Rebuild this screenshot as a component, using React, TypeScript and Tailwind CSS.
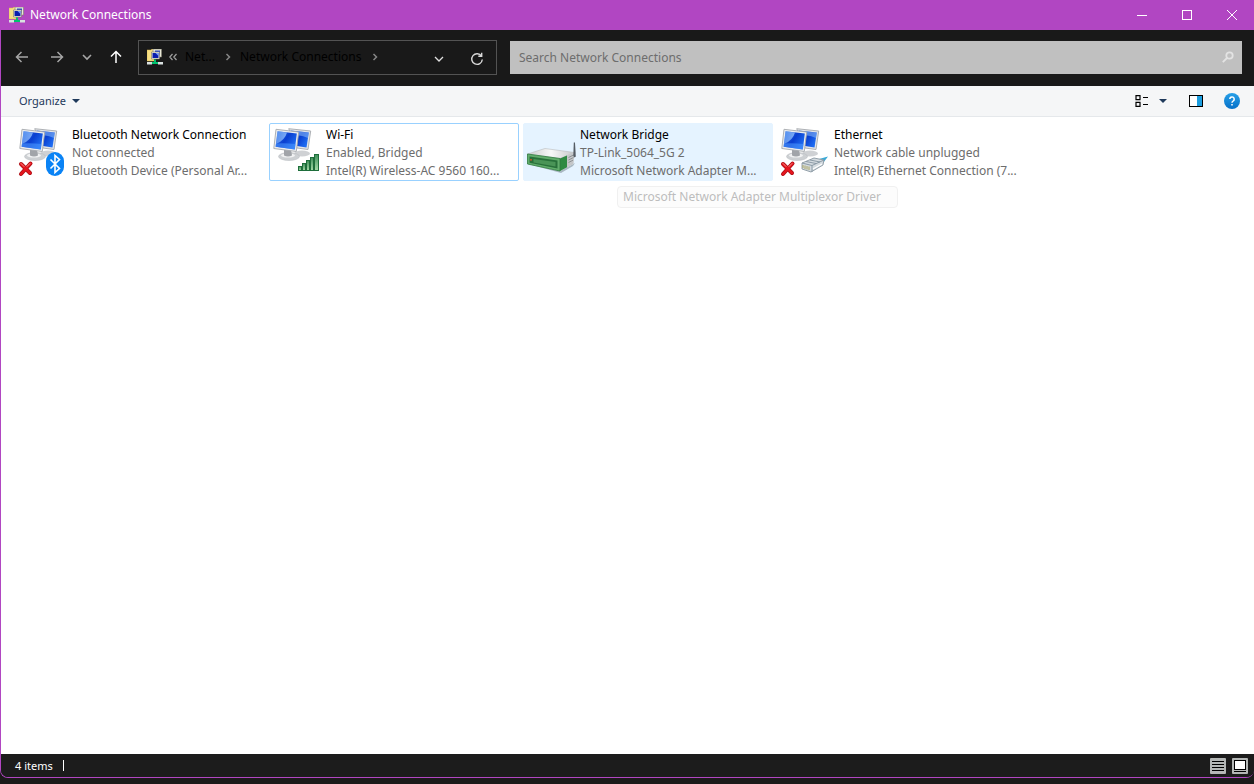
import type { ReactNode } from "react";

function Monitors() {
  return (
    <g strokeLinejoin="round">
      <ellipse cx="33" cy="30.500" rx="8" ry="3" fill="#cfd1d4" />
      <path d="M19.700 5.700 41.700 8 39 26.500 28 25Z" fill="#e3e5e8" stroke="#a6a9ae" strokeWidth=".9" />
      <path d="M21.500 7.500 39.800 9.500 37.500 24.500 28 23Z" fill="url(#screen)" />
      <path d="M29 8.500 39.800 9.500 39 15Q33 12 29 12.500Z" fill="#8cbcf8" opacity=".55" />
      <ellipse cx="20" cy="33.500" rx="10.500" ry="4" fill="#cdd0d3" stroke="#b5b8bd" strokeWidth=".5" />
      <ellipse cx="19" cy="32.500" rx="7" ry="2" fill="#f1f2f3" />
      <path d="M15 26.500h7l1 6q-4 2-8 0z" fill="#a1a4a9" />
      <path d="M7 6.300 29.700 9 27.300 28.500 4.800 25.500Z" fill="#eceef0" stroke="#a6a9ae" strokeWidth=".9" />
      <path d="M8.500 8.200 27.800 10.600 25.800 26.500 6.600 23.800Z" fill="url(#screen)" />
      <path d="M8.500 8.200 18 9.400Q16 17 7 21Z" fill="url(#shine)" />
      <path d="M6.600 23.800 7 20.500Q17 20 26.500 21L25.800 26.500Z" fill="#4f9bff" opacity=".55" />
    </g>
  );
}

function Cross() {
  return (
    <g strokeLinecap="round" fill="none">
      <path d="M6 41 15 50M15.500 40.500 6 51" stroke="#a80f17" strokeWidth="4" />
      <path d="M6 41 15 50M15.500 40.500 6 51" stroke="#e5161e" strokeWidth="2.600" />
      <path d="M6 40.500 9 43.500M15 40.500 12 43.500" stroke="#f98c86" strokeWidth="1" />
    </g>
  );
}

function TileIcon({ children }: { children: ReactNode }) {
  return (
    <svg aria-hidden="true" viewBox="1 1 56 56" className="h-14 w-14 shrink-0">
      {children}
    </svg>
  );
}

function BluetoothIcon() {
  return (
    <TileIcon>
      <Monitors />
      <Cross />
      <rect x="31" y="29" width="18" height="24" rx="9" fill="#0a83f5" />
      <path d="M35.500 36.500 44.500 45.500 40 49.500V32.500L44.500 36.500 35.500 45.500" fill="none" stroke="#fff" strokeWidth="1.600" />
    </TileIcon>
  );
}

function WifiIcon() {
  return (
    <TileIcon>
      <Monitors />
      <g fill="url(#bars)" stroke="#1e6e3b" strokeWidth="1">
        <rect x="29.500" y="43.500" width="3" height="4" />
        <rect x="33.500" y="40.500" width="3" height="7" />
        <rect x="37.500" y="37.500" width="3" height="10" />
        <rect x="41.500" y="34.500" width="3" height="13" />
        <rect x="45.500" y="31.500" width="4" height="16" />
      </g>
    </TileIcon>
  );
}

function BridgeIcon() {
  return (
    <TileIcon>
      <path d="M5 41 37 48 52 40 50 43 38 50Z" fill="#a9b8c2" />
      <path d="M4.500 31 22 25.500 51.500 29.500 37 35.500Z" fill="url(#lid)" stroke="#b9bcbe" strokeWidth=".6" />
      <path d="M37 35.500 51.500 29.500 50.500 41 37 48Z" fill="#c4c6c8" />
      <path d="M37 35.500 44 32.600V44.300L37 48Z" fill="#2e8a42" />
      <path d="M45.500 34.500 50.500 32M45.500 37 50.500 34.500M45.500 39.500 50 37.200" stroke="#8d9194" strokeWidth="1" />
      <path d="M4.500 31 37 35.500V48L4.500 41Z" fill="#62ad6c" stroke="#2f7a3c" strokeWidth=".8" />
      <path d="M6.500 33.500 34.500 37.500V45.500L6.500 39.800Z" fill="#28703a" />
      <path d="M10.500 36 32.500 39V43.500L10.500 39.500Z" fill="#4a9457" />
      <circle cx="8" cy="36.800" r=".9" fill="#f0512c" />
      <path d="M50.300 33 50.800 19.500H52L52.800 33.500 51.500 34.500Z" fill="#555c63" />
    </TileIcon>
  );
}

function EthernetIcon() {
  return (
    <TileIcon>
      <Monitors />
      <Cross />
      <path d="M42 36 51 33.500 46 40 41 42Z" fill="#39a9d6" />
      <path d="M25 40 37 35 47 37 46 42 34 49 25 46Z" fill="#d4dbe0" stroke="#8b98a3" strokeWidth=".9" />
      <path d="M25 40 35 42.500V49M35 42.500 47 37M29 38.500 39 40.500M33 37 43 39" fill="none" stroke="#8594a0" strokeWidth=".9" />
      <path d="M26 42v3M28 42.500v3.500M30 43v3.500M32 43.500v3.500" stroke="#a8a158" strokeWidth=".9" />
      <path d="M36 46 45 41" stroke="#fff" strokeWidth="1.200" />
    </TileIcon>
  );
}

function NetworkLogo() {
  return (
    <svg aria-hidden="true" viewBox="0 0 16 16" className="size-4 shrink-0">
      <path d="M0 1H4L5 0H7V12H0Z" fill="#f6df83" stroke="#d9b64d" strokeWidth=".5" />
      <path d="M6 0h8.500v8H6z" fill="#e9e8d7" stroke="#807d71" strokeWidth=".6" />
      <path d="M8 1.500h5v5H8z" fill="#2c4ec8" />
      <path d="M4.500 3h8v7h-8z" fill="#f0efdf" stroke="#77746a" strokeWidth=".6" />
      <path d="M5.500 4h6v5h-6z" fill="#0a1dad" />
      <path d="M8.500 4h3v3z" fill="#78a0fa" />
      <path d="M7 10.500h2V13h2v2H5v-2h2z" fill="#00c26f" />
      <path d="M0 13h5v2.500H0zM11 13h5v2.500h-5z" fill="#d9e0df" />
    </svg>
  );
}

const connections = [
  { name: "Bluetooth Network Connection", status: "Not connected", device: "Bluetooth Device (Personal Ar...", icon: <BluetoothIcon />, look: "border-transparent" },
  { name: "Wi-Fi", status: "Enabled, Bridged", device: "Intel(R) Wireless-AC 9560 160...", icon: <WifiIcon />, look: "border-[#99d1ff]" },
  { name: "Network Bridge", status: "TP-Link_5064_5G 2", device: "Microsoft Network Adapter M...", icon: <BridgeIcon />, look: "border-[#e5f3ff] bg-[#e5f3ff]", tip: "Microsoft Network Adapter Multiplexor Driver" },
  { name: "Ethernet", status: "Network cable unplugged", device: "Intel(R) Ethernet Connection (7...", icon: <EthernetIcon />, look: "border-transparent" },
];

function TitleBar() {
  return (
    <header className="flex h-[30px] items-center bg-[#b146c2] pl-2 text-white">
      <NetworkLogo />
      <h1 className="ml-[5px] flex-1 text-[12px] leading-4">Network Connections</h1>
      <button aria-label="Minimize" className="flex h-full w-[45px] items-center justify-center">
        <svg viewBox="0 0 10 10" className="size-2.5"><path d="M0 5.500h10" stroke="currentColor" /></svg>
      </button>
      <button aria-label="Maximize" className="flex h-full w-[45px] items-center justify-center">
        <svg viewBox="0 0 10 10" className="size-2.5"><rect x=".5" y=".5" width="9" height="9" fill="none" stroke="currentColor" /></svg>
      </button>
      <button aria-label="Close" className="flex h-full w-[45px] items-center justify-center">
        <svg viewBox="0 0 10 10" className="size-2.5"><path d="M0 0 10 10M10 0 0 10" stroke="currentColor" /></svg>
      </button>
    </header>
  );
}

function NavBar() {
  return (
    <nav aria-label="Navigation" className="flex h-14 items-center bg-[#191919] pr-3 pb-0.5 pl-[11px]">
      <button aria-label="Back" className="flex w-5 justify-center text-[#a6a6a6]">
        <svg viewBox="0 0 14 14" className="size-3.5" fill="none" stroke="currentColor" strokeWidth="1.500"><path d="M13 7H1.500M6.500 2 1.500 7l5 5" /></svg>
      </button>
      <button aria-label="Forward" className="ml-[15px] flex w-5 justify-center text-[#a6a6a6]">
        <svg viewBox="0 0 14 14" className="size-3.5" fill="none" stroke="currentColor" strokeWidth="1.500"><path d="M1 7h11.500M7.500 2l5 5-5 5" /></svg>
      </button>
      <button aria-label="Recent locations" className="ml-2.5 flex w-5 justify-center text-[#a6a6a6]">
        <svg viewBox="0 0 10 10" className="size-2.5" fill="none" stroke="currentColor" strokeWidth="1.600"><path d="M1 3 5 7l4-4" /></svg>
      </button>
      <button aria-label="Up" className="ml-[9px] flex w-5 justify-center text-white">
        <svg viewBox="0 0 14 14" className="size-3.5" fill="none" stroke="currentColor" strokeWidth="1.500"><path d="M7 13V1.500M2 6.500l5-5 5 5" /></svg>
      </button>
      <div className="ml-3 flex h-[35px] w-[359px] items-center border border-[#535353] pl-2 text-[12px] text-black">
        <NetworkLogo />
        <svg aria-hidden="true" viewBox="0 0 8 8" className="ml-1.5 size-2" fill="none" stroke="#a0a0a0" strokeWidth="1.200"><path d="M3.500 1 .8 4l2.700 3M7.500 1 4.800 4l2.700 3" /></svg>
        <a href="#network" className="ml-2 w-8">Net...</a>
        <svg aria-hidden="true" viewBox="0 0 8 8" className="ml-[7px] size-2" fill="none" stroke="#858585" strokeWidth="1.500"><path d="M2.500 1 5.500 4l-3 3" /></svg>
        <a href="#connections" className="ml-2 whitespace-nowrap">Network Connections</a>
        <svg aria-hidden="true" viewBox="0 0 8 8" className="ml-2.5 size-2" fill="none" stroke="#858585" strokeWidth="1.500"><path d="M2.500 1 5.500 4l-3 3" /></svg>
        <button aria-label="Previous locations" className="ml-auto flex w-[38px] justify-center pt-1 text-[#e0e0e0]">
          <svg viewBox="0 0 10 10" className="size-2.5" fill="none" stroke="currentColor" strokeWidth="1.300"><path d="M1 3 5 7l4-4" /></svg>
        </button>
        <button aria-label="Refresh" className="flex w-[38px] justify-center pt-1 text-[#d8d8d8]">
          <svg viewBox="0 0 14 14" className="size-3.5" fill="none" stroke="currentColor" strokeWidth="1.400"><path d="M11.500 4.200A5.300 5.300 0 1 0 12.300 7.500M11.700 .8V4.200H8.300" /></svg>
        </button>
      </div>
      <label className="ml-[13px] flex h-[33px] flex-1 items-center bg-[#c0c0c0] pr-2 pl-[9px]">
        <input aria-label="Search Network Connections" placeholder="Search Network Connections" className="min-w-0 flex-1 bg-transparent pt-0.5 text-[12px] outline-none placeholder:text-[#6d6d6d]" />
        <svg aria-hidden="true" viewBox="0 0 12 12" className="size-3" fill="none" stroke="#e3e3e3" strokeWidth="1.800"><circle cx="7.500" cy="4.500" r="3.200" /><path d="M5 7 .8 11.200" /></svg>
      </label>
    </nav>
  );
}

function CommandBar() {
  return (
    <div className="flex h-[31px] items-center border-b border-[#e5e8eb] bg-[#f5f6f7] pr-3.5 pl-[18px] text-[#1e395b]">
      <button className="flex items-center gap-1.5 text-[11px]">
        Organize
        <svg aria-hidden="true" viewBox="0 0 8 4" className="h-1 w-2"><path d="M0 0h8L4 4z" fill="currentColor" /></svg>
      </button>
      <button aria-label="Change view" className="ml-auto">
        <svg viewBox="0 0 14 12" className="h-3 w-3.5" fill="none" stroke="#000" strokeWidth="1.200"><path d="M1 .6h4v4H1zM1 7.400h4v4H1zM8 2.500h5M8 9.500h5" /></svg>
      </button>
      <button aria-label="More view options" className="ml-2.5">
        <svg viewBox="0 0 8 4" className="h-1 w-2"><path d="M0 0h8L4 4z" fill="currentColor" /></svg>
      </button>
      <button aria-label="Show preview pane" className="ml-[22px]">
        <svg viewBox="0 0 14 12" className="h-3 w-3.5"><rect x=".5" y=".5" width="13" height="11" fill="#fff" stroke="#000" /><path d="M8 1h5v10H8z" fill="#1b9ee0" /></svg>
      </button>
      <button aria-label="Help" className="ml-[21px]">
        <svg viewBox="0 0 16 16" className="size-4">
          <circle cx="8" cy="8" r="8" fill="url(#help)" />
          <path d="M5.800 6.100a2.200 2.200 0 1 1 3.500 1.800Q8 8.700 8 9.800M8 11v1.600" fill="none" stroke="#fff" strokeWidth="1.500" />
        </svg>
      </button>
    </div>
  );
}

export default function App() {
  return (
    <div className="flex min-h-screen flex-col bg-[#1b1a1a] pb-1.5 font-['Noto_Sans',sans-serif]">
      <svg aria-hidden="true" className="absolute size-0">
        <defs>
          <linearGradient id="screen" x2="1" y2=".6"><stop stopColor="#2c74ec" /><stop offset=".55" stopColor="#0a3fd0" /><stop offset="1" stopColor="#1f6df2" /></linearGradient>
          <linearGradient id="shine" x2="1" y2=".4"><stop stopColor="#7fb2f7" stopOpacity=".5" /><stop offset="1" stopColor="#9cc8ff" stopOpacity=".8" /></linearGradient>
          <linearGradient id="bars" x2="0" y2="1"><stop stopColor="#3f8f5a" /><stop offset="1" stopColor="#a5dba8" /></linearGradient>
          <linearGradient id="lid" x2="1"><stop stopColor="#c9cbcc" /><stop offset=".5" stopColor="#f8f8f8" /><stop offset="1" stopColor="#c5c7c9" /></linearGradient>
          <linearGradient id="help" x2="0" y2="1"><stop stopColor="#27a0e8" /><stop offset="1" stopColor="#0670c8" /></linearGradient>
        </defs>
      </svg>
      <div className="flex flex-1 flex-col overflow-hidden rounded-b-lg border-b border-l border-[#b146c2]">
        <TitleBar />
        <NavBar />
        <CommandBar />
        <main className="flex-1 bg-white px-3.5 pt-1.5">
          <ul className="flex flex-wrap gap-1">
            {connections.map((c) => (
              <li key={c.name} className="relative">
                <button className={`flex h-[58px] w-[250px] rounded-xs border text-left text-[12px] leading-[18px] ${c.look}`}>
                  {c.icon}
                  <span className="min-w-0 pt-0.5 whitespace-nowrap text-[#6d6d6d]">
                    <span className="block text-black">{c.name}</span>
                    <span className="block">{c.status}</span>
                    <span className="block">{c.device}</span>
                  </span>
                </button>
                {c.tip && (
                  <div role="tooltip" className="absolute top-[63px] left-[94px] rounded-sm border border-[#f0f0f0] bg-[#fcfcfc] pr-4 pl-[5px] text-[12px] leading-5 whitespace-nowrap text-[#bdbdbd]">
                    {c.tip}
                  </div>
                )}
              </li>
            ))}
          </ul>
        </main>
        <footer className="flex h-[23px] items-center bg-[#1c1c1c] pr-1.5 pl-3.5 text-[11px] text-white">
          <span className="pt-0.5">4 items</span>
          <span className="ml-2.5 h-[11px] w-px bg-white" />
          <button aria-label="Details view" className="ml-auto">
            <svg viewBox="0 0 16 16" className="size-4"><rect width="16" height="16" rx="1" fill="#b4b7b6" /><path d="M2 3.500h12M2 6.500h12M2 9.500h12M2 12.500h12" stroke="#000" /></svg>
          </button>
          <button aria-label="Large icons view" className="ml-1.5">
            <svg viewBox="0 0 16 16" className="size-4"><rect width="16" height="16" rx="1" fill="#b4b7b6" /><rect x="2.500" y="2.500" width="11" height="9" fill="#fff" stroke="#000" /><path d="M2 13.500h12" stroke="#000" /></svg>
          </button>
        </footer>
      </div>
    </div>
  );
}
